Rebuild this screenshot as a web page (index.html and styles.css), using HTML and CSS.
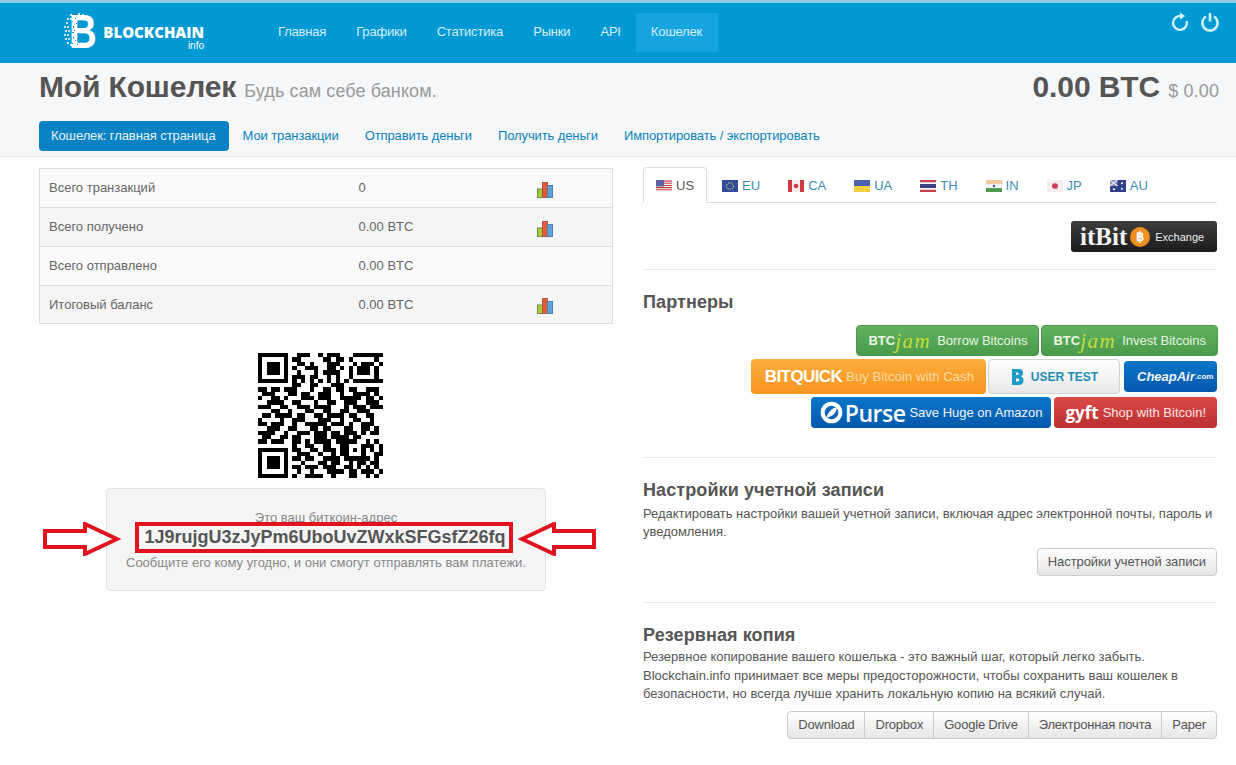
FILE: index.html
```html
<!DOCTYPE html>
<html lang="ru">
<head>
  <meta charset="UTF-8">
  <title>Мой Кошелек</title>
  <link rel="stylesheet" href="styles.css">
</head>
<body>

  <svg class="defs" width="0" height="0">
    <symbol id="bars" viewBox="0 0 16 16">
      <rect x="0.5" y="7" width="5" height="8.5" fill="#a8cc2e" stroke="#6f8a4a"/>
      <rect x="5.5" y="0.5" width="5" height="15" fill="#e8593a" stroke="#a85a4a"/>
      <rect x="10.5" y="3.5" width="5" height="12" fill="#5aa5dc" stroke="#4f7fa6"/>
    </symbol>
  </svg>

  <nav class="navbar">
    <a class="brand" href="#">
      <span class="brand-mark">
        <span class="brand-b">B</span>
        <svg class="brand-pixels" width="32" height="38" viewBox="0 0 32 38">
          <path d="M2 9h2v2H2zM0 13h2v2H0zM3 13h2v2H3zM1 17h2v2H1zM4 17h2v2H4zM0 21h2v2H0zM3 21h2v2H3zM1 25h2v2H1zM4 25h2v2H4zM3 29h2v2H3zM6 31h2v2H6zM6 5h2v2H6zM3 5h2v2H3zM10 2h2v2h-2zM6 1h2v2H6zM14 0h2v2h-2zM18 1h2v2h-2z" fill="#fff" opacity=".8"/>
          <path d="M8 8h1v1H8zM9 13h1v2H9zM8 19h2v1H8zM9 24h1v2H9zM8 30h1v1H8zM11 5h1v1h-1zM10 17h1v1h-1zM11 27h1v1h-1zM13 31h1v1h-1zM12 10h1v1h-1z" fill="#0099d3"/>
        </svg>
      </span>
      <span class="brand-text">BLOCKCHAIN<small>info</small></span>
    </a>
    <ul class="nav-links">
      <li><a href="#">Главная</a></li>
      <li><a href="#">Графики</a></li>
      <li><a href="#">Статистика</a></li>
      <li><a href="#">Рынки</a></li>
      <li><a href="#">API</a></li>
      <li class="active"><a href="#">Кошелек</a></li>
    </ul>
    <div class="nav-icons">
      <svg width="20" height="20" viewBox="0 0 20 20" fill="none" stroke="#cdf3fb" stroke-width="2.4">
        <path d="M11.5 4.2A6.9 6.9 0 1 0 16.6 9"/>
        <path d="M10 0.2l5 3.9-5 3.6z" fill="#cdf3fb" stroke="none"/>
      </svg>
      <svg width="20" height="20" viewBox="0 0 20 20" fill="none" stroke="#cdf3fb" stroke-width="2.6">
        <path d="M6 4.5a7.6 7.6 0 1 0 8 0"/>
        <path d="M10 1v8.5"/>
      </svg>
    </div>
  </nav>

  <header class="page-head">
    <div class="head-row">
      <h1>Мой Кошелек <small>Будь сам себе банком.</small></h1>
      <div class="balance">0.00 BTC <small>$ 0.00</small></div>
    </div>
    <ul class="pills">
      <li class="active"><a href="#">Кошелек: главная страница</a></li>
      <li><a href="#">Мои транзакции</a></li>
      <li><a href="#">Отправить деньги</a></li>
      <li><a href="#">Получить деньги</a></li>
      <li><a href="#">Импортировать / экспортировать</a></li>
    </ul>
  </header>

  <main class="content">
    <section class="col-left">
      <table class="stats">
        <tr><td>Всего транзакций</td><td>0</td><td><svg class="bars"><use href="#bars"/></svg></td></tr>
        <tr><td>Всего получено</td><td>0.00 BTC</td><td><svg class="bars"><use href="#bars"/></svg></td></tr>
        <tr><td>Всего отправлено</td><td>0.00 BTC</td><td></td></tr>
        <tr><td>Итоговый баланс</td><td>0.00 BTC</td><td><svg class="bars"><use href="#bars"/></svg></td></tr>
      </table>

      <div class="qr">
        <svg width="125" height="125" viewBox="0 0 29 29" shape-rendering="crispEdges">
          <path fill="none" stroke="#000" stroke-width="1" d="M0 .5h7m2 0h3m2 0h1m1 0h3m3 0h7
            M0 1.5h1m5 0h1m1 0h2m5 0h2m1 0h2m1 0h1m5 0h1
            M0 2.5h1m1 0h3m1 0h1m2 0h2m1 0h1m3 0h3m3 0h1m1 0h3m1 0h1
            M0 3.5h1m1 0h3m1 0h1m1 0h1m2 0h3m2 0h2m1 0h1m1 0h1m1 0h3m1 0h1
            M0 4.5h1m1 0h3m1 0h1m2 0h1m3 0h1m1 0h4m2 0h1m1 0h3m1 0h1
            M0 5.5h1m5 0h1m1 0h3m1 0h2m2 0h1m1 0h1m2 0h1m5 0h1
            M0 6.5h7m1 0h1m1 0h1m1 0h1m1 0h1m1 0h1m1 0h1m1 0h1m1 0h7
            M8 7.5h2m2 0h2m3 0h3
            M0 8.5h2m1 0h2m1 0h3m3 0h1m2 0h2m1 0h2m1 0h2m2 0h3
            M1 9.5h3m3 0h2m1 0h2m2 0h3m2 0h1m2 0h4m1 0h1
            M0 10.5h1m2 0h2m1 0h1m3 0h3m1 0h3m2 0h5m1 0h2m1 0h1
            M2 11.5h4m2 0h2m3 0h1m2 0h2m2 0h3m2 0h3
            M0 12.5h3m2 0h2m2 0h3m1 0h4m3 0h1m1 0h3m1 0h3
            M3 13.5h2m2 0h1m3 0h2m2 0h2m2 0h2m2 0h3
            M1 14.5h2m1 0h4m1 0h2m2 0h2m1 0h4m1 0h2m2 0h2
            M0 15.5h1m4 0h1m2 0h3m3 0h3m2 0h1m2 0h2m2 0h1
            M0 16.5h2m1 0h3m2 0h1m2 0h5m1 0h3m1 0h1m2 0h3
            M2 17.5h3m2 0h2m3 0h2m1 0h2m3 0h2m2 0h2m1 0h1
            M0 18.5h4m2 0h1m2 0h3m1 0h3m1 0h2m1 0h3m1 0h1m1 0h2
            M1 19.5h2m2 0h2m1 0h2m3 0h3m1 0h4m1 0h2
            M0 20.5h2m1 0h3m2 0h2m1 0h1m1 0h4m1 0h5m2 0h1m1 0h1
            M8 21.5h1m2 0h2m2 0h2m2 0h2m3 0h3m1 0h1
            M0 22.5h7m1 0h2m2 0h2m1 0h3m1 0h2m1 0h1m1 0h1m1 0h1m1 0h1
            M0 23.5h1m5 0h1m2 0h3m2 0h1m2 0h1m1 0h2m3 0h1m2 0h2
            M0 24.5h1m1 0h3m1 0h1m1 0h2m1 0h2m2 0h4m1 0h6m1 0h1
            M0 25.5h1m1 0h3m1 0h1m3 0h1m3 0h2m1 0h2m2 0h1m1 0h2m1 0h2
            M0 26.5h1m1 0h3m1 0h1m1 0h2m1 0h3m1 0h3m2 0h2m1 0h1m1 0h1m1 0h1
            M0 27.5h1m5 0h1m2 0h1m2 0h1m3 0h4m1 0h2m1 0h3m1 0h1
            M0 28.5h7m1 0h1m2 0h4m2 0h1m3 0h2m2 0h1m1 0h1"/>
        </svg>
      </div>

      <div class="address-well">
        <p class="muted">Это ваш биткоин-адрес</p>
        <div class="address-mark">
          <svg class="arrow arrow-left" width="78" height="34" viewBox="0 0 78 34"><path d="M2 9h40V2l32 15-32 15v-7H2z" fill="#fff" stroke="#e0141f" stroke-width="4"/></svg>
          <strong class="address">1J9rujgU3zJyPm6UboUvZWxkSFGsfZ26fq</strong>
          <svg class="arrow arrow-right" width="78" height="34" viewBox="0 0 78 34"><path d="M76 9H36V2L4 17l32 15v-7h40z" fill="#fff" stroke="#e0141f" stroke-width="4"/></svg>
        </div>
        <p class="muted muted-below">Сообщите его кому угодно, и они смогут отправлять вам платежи.</p>
      </div>
    </section>

    <section class="col-right">
      <ul class="tabs">
        <li class="active"><a href="#">
          <svg class="flag" viewBox="0 0 14 11" preserveAspectRatio="none"><rect width="14" height="11" fill="#f4f4f4"/><path d="M0 1h14M0 3h14M0 5h14M0 7h14M0 9h14" stroke="#c9424a" stroke-width="1"/><rect width="7" height="6" fill="#5a64a0"/></svg>US</a></li>
        <li><a href="#">
          <svg class="flag" viewBox="0 0 14 11" preserveAspectRatio="none"><rect width="14" height="11" fill="#344a9a"/><circle cx="7" cy="5.5" r="3" fill="none" stroke="#d8d860" stroke-width="1" stroke-dasharray="1 1"/></svg>EU</a></li>
        <li><a href="#">
          <svg class="flag" viewBox="0 0 14 11" preserveAspectRatio="none"><rect width="14" height="11" fill="#f4eeee"/><rect width="3.5" height="11" fill="#cf3a3f"/><rect x="10.5" width="3.5" height="11" fill="#cf3a3f"/><circle cx="7" cy="5.5" r="2" fill="#cf3a3f"/></svg>CA</a></li>
        <li><a href="#">
          <svg class="flag" viewBox="0 0 14 11" preserveAspectRatio="none"><rect width="14" height="5.5" fill="#4a62b0"/><rect y="5.5" width="14" height="5.5" fill="#f0d040"/></svg>UA</a></li>
        <li><a href="#">
          <svg class="flag" viewBox="0 0 14 11" preserveAspectRatio="none"><rect width="14" height="11" fill="#c9424a"/><rect y="2" width="14" height="7" fill="#f4f4f4"/><rect y="3.7" width="14" height="3.6" fill="#3a3f80"/></svg>TH</a></li>
        <li><a href="#">
          <svg class="flag" viewBox="0 0 14 11" preserveAspectRatio="none"><rect width="14" height="11" fill="#f4f4f4"/><rect width="14" height="3.6" fill="#f0c8a0"/><rect y="7.4" width="14" height="3.6" fill="#4a9a50"/><circle cx="7" cy="5.5" r="1.2" fill="#5a64a0"/></svg>IN</a></li>
        <li><a href="#">
          <svg class="flag" viewBox="0 0 14 11" preserveAspectRatio="none"><rect width="14" height="11" fill="#f6eeee"/><circle cx="7" cy="5.5" r="2.6" fill="#d0405a"/></svg>JP</a></li>
        <li><a href="#">
          <svg class="flag" viewBox="0 0 14 11" preserveAspectRatio="none"><rect width="14" height="11" fill="#2f4288"/><rect width="6.5" height="5.5" fill="#8a8fc0"/><path d="M0 0l6.5 5.5M6.5 0L0 5.5" stroke="#f0e0e0" stroke-width="1"/><circle cx="10.5" cy="3" r=".9" fill="#fff"/><circle cx="10.5" cy="8" r=".9" fill="#fff"/><circle cx="3.5" cy="8.5" r="1" fill="#fff"/></svg>AU</a></li>
      </ul>

      <div class="exchange">
        <a class="itbit" href="#"><span class="itbit-name">itBit</span><span class="btc-coin">฿</span><span class="itbit-label">Exchange</span></a>
      </div>

      <hr>

      <h3>Партнеры</h3>
      <div class="partners">
        <div class="partner-row">
          <a class="pbtn green" href="#"><span class="jam"><b>BTC</b><i>jam</i></span> Borrow Bitcoins</a>
          <a class="pbtn green" href="#"><span class="jam"><b>BTC</b><i>jam</i></span> Invest Bitcoins</a>
        </div>
        <div class="partner-row">
          <a class="pbtn orange" href="#"><b class="bitquick">BITQUICK</b> <span class="faded">Buy Bitcoin with Cash</span></a>
          <a class="pbtn light" href="#">
            <svg width="14" height="18" viewBox="0 0 14 18"><path d="M2 1h7c3 0 4 1.500 4 4 0 1.500-.7 2.800-2 3.500 1.500.6 2.500 1.800 2.500 3.800 0 3-1.800 4.700-4.500 4.700H2zM6 4.500v2.500h1.500c.8 0 1.200-.5 1.200-1.200S8.300 4.500 7.500 4.500zM6 10.500V13.500h2c.9 0 1.300-.6 1.300-1.500s-.4-1.500-1.300-1.500z" fill="#1e9bc6" fill-rule="evenodd"/></svg>
            USER TEST</a>
          <a class="pbtn blue cheap" href="#"><i>CheapAir</i><small>.com</small></a>
        </div>
        <div class="partner-row">
          <a class="pbtn blue purse-btn" href="#">
            <svg width="23" height="23" viewBox="0 0 26 26"><circle cx="13" cy="13" r="10" fill="none" stroke="#fff" stroke-width="4.500"/><path d="M7 19C9 13 13 8 19 7c0 6-5 11-12 12z" fill="#fff"/></svg>
            <span class="purse">Purse</span> Save Huge on Amazon</a>
          <a class="pbtn red" href="#"><b class="gyft">gyft</b> Shop with Bitcoin!</a>
        </div>
      </div>

      <hr class="hr-partners">

      <h3>Настройки учетной записи</h3>
      <p class="settings-text">Редактировать настройки вашей учетной записи, включая адрес электронной почты, пароль и уведомления.</p>
      <div class="actions"><a class="btn" href="#">Настройки учетной записи</a></div>

      <hr class="hr-settings">

      <h3>Резервная копия</h3>
      <p class="backup-text">Резервное копирование вашего кошелька - это важный шаг, который легко забыть. Blockchain.info принимает все меры предосторожности, чтобы сохранить ваш кошелек в безопасности, но всегда лучше хранить локальную копию на всякий случай.</p>
      <div class="actions">
        <div class="btn-group">
          <a class="btn" href="#">Download</a>
          <a class="btn" href="#">Dropbox</a>
          <a class="btn" href="#">Google Drive</a>
          <a class="btn" href="#">Электронная почта</a>
          <a class="btn" href="#">Paper</a>
        </div>
      </div>
    </section>
  </main>

</body>
</html>
```

FILE: styles.css
```css
* {
  box-sizing: border-box;
}

body {
  margin: 0;
  font-family: "Liberation Sans", Arial, sans-serif;
  font-size: 13px;
  line-height: 18px;
  color: #555;
  background: #fff;
}

a {
  text-decoration: none;
}

ul {
  list-style: none;
  margin: 0;
  padding: 0;
}

.defs {
  position: absolute;
}

/* top bar */
.navbar {
  display: flex;
  height: 63px;
  padding-top: 10px;
  background: #0099d3;
  border-top: 3px solid #8ccbe6;
  position: relative;
}

.brand {
  display: flex;
  width: 263px;
  margin-left: 64px;
  color: #fff;
}

.brand-mark {
  position: relative;
  width: 37px;
  height: 38px;
}

.brand-b {
  position: absolute;
  left: 5px;
  top: 0;
  font-size: 48px;
  line-height: 38px;
  font-weight: bold;
  transform: scaleX(0.8);
  transform-origin: left center;
}

.brand-pixels {
  position: absolute;
  left: 0;
  top: 0;
}

.brand-text {
  margin: 12px 0 0 1px;
  font-size: 15px;
  line-height: 15px;
  font-weight: 800;
  letter-spacing: 0;
  font-family: "Open Sans", sans-serif;
  text-align: right;
  width: 102px;
}

.brand-text small {
  display: block;
  font-size: 10px;
  line-height: 12px;
  font-weight: normal;
  font-family: "Liberation Sans", sans-serif;
}

.nav-links {
  display: flex;
  margin-left: -64px;
  height: 39px;
}

.nav-links a {
  display: block;
  padding: 0 15px;
  line-height: 38px;
  color: #d7eef8;
  letter-spacing: -0.18px;
}

.nav-links .active a {
  padding-right: 16px;
}

.nav-links .active {
  background: #14a5e0;
}

.nav-icons {
  display: flex;
  gap: 10px;
  position: absolute;
  right: 16px;
  top: 9px;
}

/* page heading */
.page-head {
  height: 94px;
  padding: 4px 17px 0 39px;
  background: #f5f7f8;
  border-bottom: 1px solid #e4e6e7;
}

.head-row {
  display: flex;
  justify-content: space-between;
  align-items: baseline;
  height: 54px;
}

h1 {
  margin: 0;
  font-size: 30px;
  line-height: 40px;
  font-weight: bold;
  color: #555;
  letter-spacing: -0.15px;
}

h1 small,
.balance small {
  font-size: 18px;
  font-weight: normal;
  color: #999;
  letter-spacing: 0.1px;
}

.balance {
  font-size: 30px;
  line-height: 40px;
  font-weight: bold;
  color: #555;
  letter-spacing: -0.1px;
}

.pills {
  display: flex;
  gap: 2px;
  letter-spacing: -0.1px;
}

.pills a {
  display: block;
  padding: 0 12px;
  line-height: 30px;
  border-radius: 4px;
  color: #0a82bd;
}

.pills .active a {
  background: #0a82c4;
  color: #e6f4fa;
  padding-right: 13px;
}

/* content columns */
.content {
  display: flex;
  gap: 30px;
  padding: 10px 19px 0 39px;
}

.col-left,
.col-right {
  width: 574px;
}

.stats {
  width: 100%;
  margin-top: 1px;
  border-collapse: collapse;
  border: 1px solid #ddd;
  color: #666;
}

.stats td {
  height: 39px;
  padding: 0 9px;
  border-top: 1px solid #ddd;
  background: #fafafa;
}

.stats tr:nth-child(even) td {
  background: #f5f5f5;
}

.stats tr:last-child td {
  height: 38px;
}

.stats td:nth-child(1) {
  width: 310px;
}

.stats td:nth-child(2) {
  width: 178px;
}

.bars {
  display: block;
  width: 16px;
  height: 16px;
  margin-top: 3px;
}

.qr {
  display: flex;
  justify-content: center;
  padding: 29px 0 10px;
  margin-left: -12px;
}

.qr svg {
  display: block;
}

.address-well {
  width: 440px;
  height: 103px;
  margin-left: 67px;
  padding-top: 20px;
  text-align: center;
  background: #f5f5f5;
  border: 1px solid #e3e3e3;
  border-radius: 4px;
}

.muted {
  margin: 0;
  color: #888;
}

.muted-below {
  margin-top: 1px;
}

.address-mark {
  position: relative;
  width: 378px;
  height: 31px;
  margin: -5px 0 0 28px;
  padding-left: 2px;
  border: 4px solid #e0141f;
}

.address {
  display: block;
  font-size: 18px;
  line-height: 23px;
  color: #555;
  white-space: nowrap;
}

.arrow {
  position: absolute;
  top: -4px;
}

.arrow-left {
  left: -96px;
}

.arrow-right {
  left: 379px;
}

/* right column */
.tabs {
  display: flex;
  height: 36px;
  border-bottom: 1px solid #ddd;
}

.tabs li {
  margin-bottom: -1px;
}

.tabs li.active {
  margin-right: 1px;
}

.tabs a {
  display: flex;
  align-items: center;
  gap: 4px;
  height: 36px;
  padding: 1px 13px 0;
  color: #3c8dae;
  border: 1px solid transparent;
  border-radius: 4px 4px 0 0;
}

.tabs .active a {
  padding: 1px 12px 0;
  color: #555;
  background: #fff;
  border-color: #ddd #ddd #fff;
}

.flag {
  width: 16px;
  height: 12px;
}

.exchange {
  display: flex;
  justify-content: flex-end;
  margin-top: 18px;
}

.itbit {
  display: flex;
  align-items: center;
  width: 146px;
  height: 31px;
  padding-left: 9px;
  color: #eee;
  background: linear-gradient(#3d3d3d, #1c1c1c);
  border-radius: 3px;
}

.itbit-name {
  font-family: "Liberation Serif", serif;
  font-size: 25px;
  font-weight: bold;
  color: #f2f2f2;
}

.btc-coin {
  width: 20px;
  height: 20px;
  margin: 0 5px 0 3px;
  border-radius: 50%;
  background: #ee8e22;
  color: #fff;
  font-size: 13px;
  line-height: 20px;
  font-weight: bold;
  text-align: center;
}

.itbit-label {
  font-size: 11px;
}

hr {
  height: 0;
  margin: 17px 0 0;
  border: 0;
  border-top: 1px solid #e8e8e8;
}

h3 {
  margin: 22px 0 0;
  font-size: 18px;
  line-height: 20px;
  font-weight: bold;
  color: #555;
  letter-spacing: 0.1px;
}

.col-right p {
  color: #555;
}

.col-right .settings-text {
  margin: 5px 0 0;
  line-height: 18px;
  letter-spacing: -0.025px;
}

.col-right .backup-text {
  margin: 3px 0 0;
  line-height: 18.500px;
}

/* partner buttons */
.partners {
  margin: 13px -1px 0 0;
}

.partner-row {
  display: flex;
  justify-content: flex-end;
  align-items: center;
  gap: 2px;
  margin-bottom: 3px;
}

.partner-row + .partner-row {
  margin-right: 1px;
}

.pbtn {
  display: flex;
  align-items: center;
  gap: 4px;
  height: 31px;
  padding: 0 11px;
  border-radius: 4px;
  color: #eef;
  white-space: nowrap;
}

.green {
  background: linear-gradient(#5fb360, #4a9b4c);
  border: 1px solid #4a984c;
  color: #e8f4e0;
}

.orange {
  height: 35px;
  padding: 0 12px 0 14px;
  background: linear-gradient(#fcae3e, #f6941e);
  color: #fff;
}

.faded {
  color: #fcdca8;
  letter-spacing: 0.1px;
}

.light {
  width: 132px;
  height: 35px;
  margin-right: 2px;
  justify-content: center;
  gap: 7px;
  background: linear-gradient(#fff, #e8e8e8);
  border: 1px solid #d2d2d2;
  color: #1e8db4;
  font-weight: bold;
  font-size: 12px;
}

.blue {
  background: linear-gradient(#0a76c8, #0558ac);
  color: #f0f4fa;
}

.purse-btn {
  gap: 2px;
  padding: 0 9px;
}

.red {
  margin-left: 1px;
  background: linear-gradient(#dc4a48, #bc2f30);
  color: #f8e6e6;
}

.jam {
  display: flex;
  align-items: center;
}

.jam b {
  font-size: 13px;
  color: #edf5e4;
}

.jam i {
  font-family: "Liberation Serif", serif;
  font-size: 21px;
  color: #c8dc38;
  letter-spacing: 1.500px;
  margin-right: 2px;
}

.bitquick {
  font-size: 17px;
  letter-spacing: -0.6px;
  color: #fff;
}

.purse {
  font-size: 23px;
  font-family: "Open Sans", sans-serif;
  font-weight: 600;
  color: #fff;
  letter-spacing: -0.5px;
  margin-right: 2px;
}

.gyft {
  font-size: 17px;
  font-family: "Open Sans", sans-serif;
  color: #fff;
}

.cheap {
  width: 93px;
  padding: 0 0 0 13px;
  gap: 0;
}

.cheap i {
  font-size: 13px;
  font-weight: bold;
}

.cheap small {
  font-size: 8px;
  font-weight: bold;
}

.hr-partners {
  margin-top: 29px;
}

.actions {
  display: flex;
  justify-content: flex-end;
  margin-top: 7px;
}

.hr-settings {
  margin-top: 26px;
}

.btn {
  display: inline-block;
  padding: 0 10px;
  line-height: 26px;
  color: #555;
  background: linear-gradient(#fff, #e6e6e6);
  border: 1px solid #ccc;
  border-radius: 4px;
  letter-spacing: -0.07px;
}

.btn-group {
  display: flex;
}

.btn-group .btn {
  border-radius: 0;
  margin-left: -1px;
  letter-spacing: -0.2px;
}

.btn-group .btn:first-child {
  border-radius: 4px 0 0 4px;
}

.btn-group .btn:last-child {
  border-radius: 0 4px 4px 0;
}
```
